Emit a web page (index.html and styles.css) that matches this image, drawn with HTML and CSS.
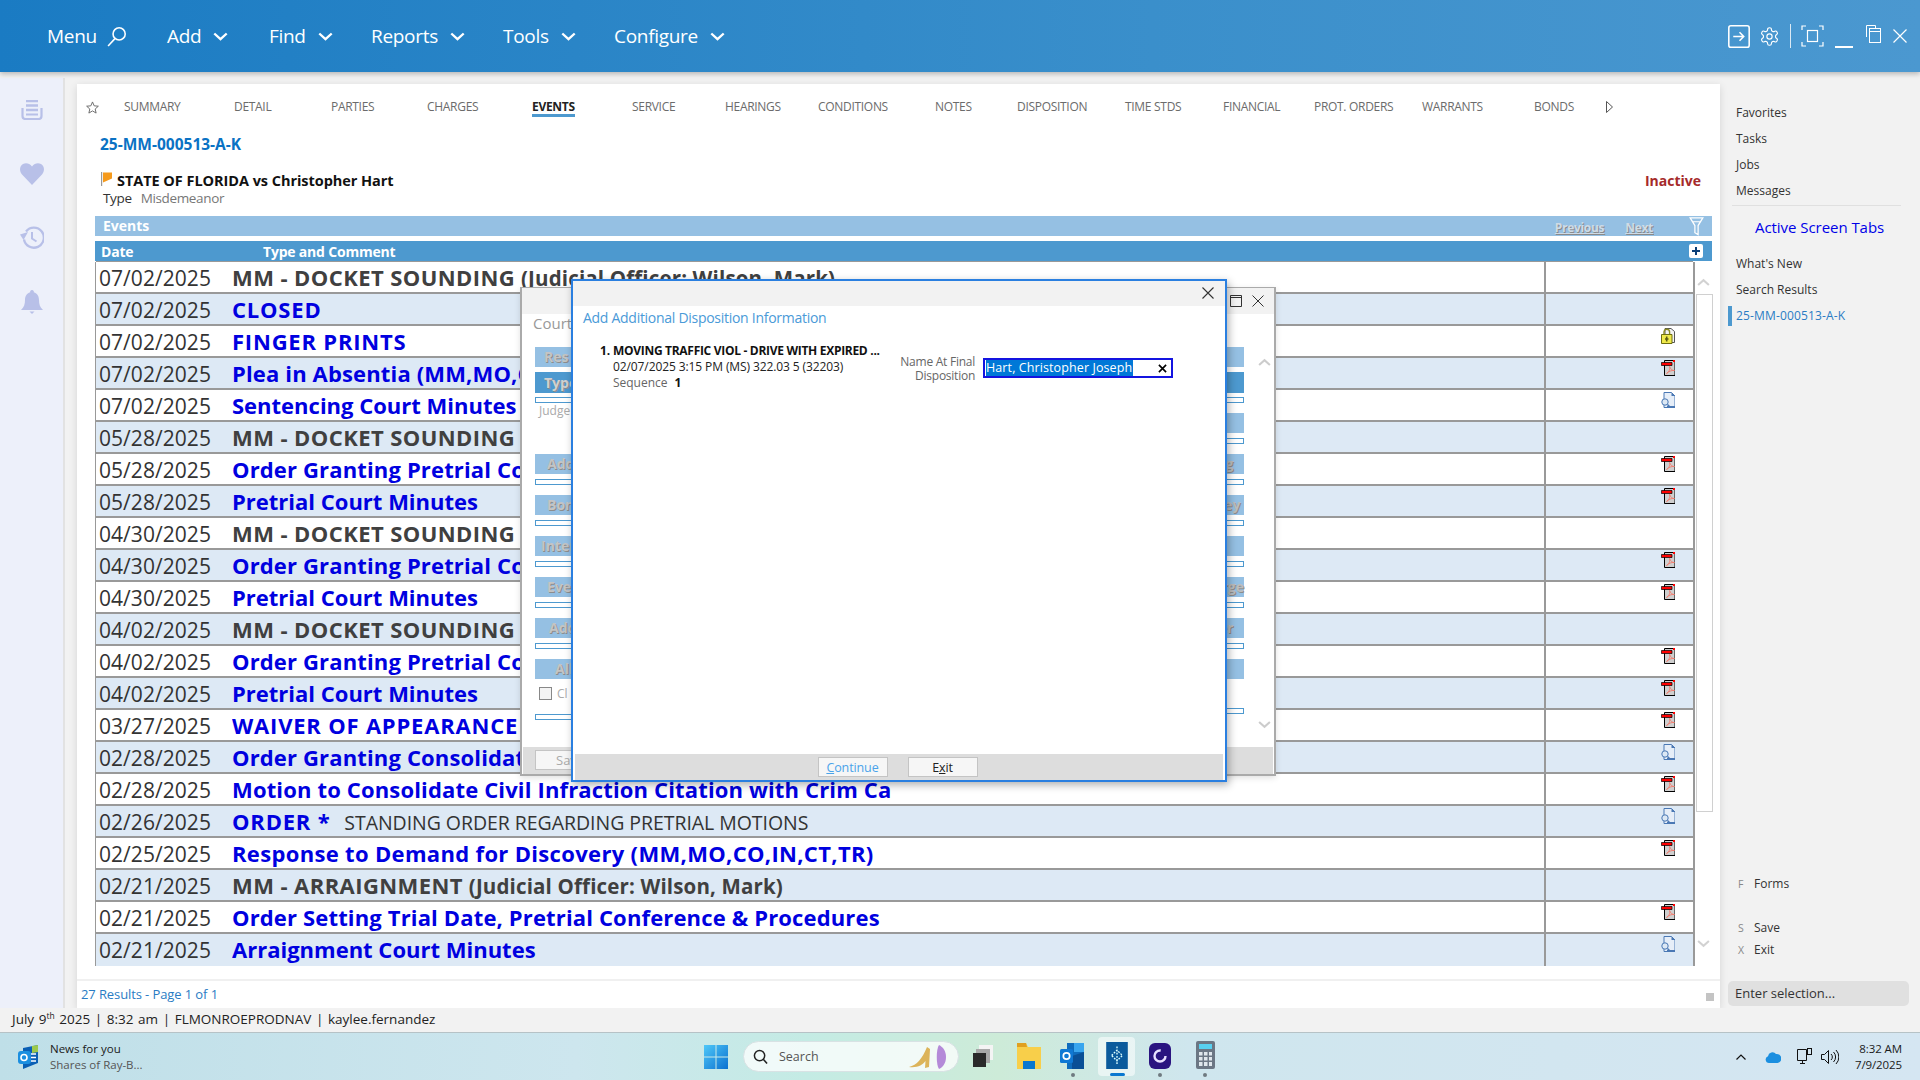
FILE: index.html
```html
<!DOCTYPE html>
<html lang="en">
<head>
<meta charset="utf-8">
<title>25-MM-000513-A-K</title>
<link rel="stylesheet" href="styles.css">
</head>
<body>
<svg class="sprite" aria-hidden="true">
  <symbol id="chev" viewBox="0 0 14 8"><path d="M1.200 1.200 7 6.500l5.800-5.300" fill="none" stroke="currentColor" stroke-width="2.200"/></symbol>
  <symbol id="pdf" viewBox="0 0 14 16">
    <path d="M3.500.5H14v15H3.500z" fill="#cfcfcf" stroke="#000"/>
    <path d="M.4 2.500h10.600v3H.4z" fill="#f00" stroke="#000" stroke-width=".7"/>
    <path d="M12 0h2v2h-2z" fill="#f00"/>
    <path d="M8.500 6.500c1 3-1 6-3 7 2-2 5-3.500 8-3-2 .5-4-1.500-5-4z" fill="none" stroke="#f47a6c" stroke-width=".9"/>
  </symbol>
  <symbol id="doc" viewBox="0 0 14 16">
    <path d="M3 .5h7.500L14 4v11.500H3z" fill="#e6eef8" stroke="#4a78b4"/>
    <path d="M10.500.5V4H14z" fill="#4a78b4"/>
    <path d="M6 15h8" stroke="#4a78b4" stroke-width="2"/>
    <circle cx="4" cy="10" r="3.200" fill="#dce8f4" stroke="#4a78b4"/>
    <path d="m6.500 12.500 2 2" stroke="#4a78b4" stroke-width="1.500"/>
  </symbol>
  <symbol id="lock" viewBox="0 0 14 16">
    <path d="M4 .5h6l3.500 3v11H4z" fill="#f4f4f4" stroke="#555"/>
    <path d="M3 7V4a2.800 2.800 0 0 1 5.600 0v3" fill="none" stroke="#8a8a20" stroke-width="1.400"/>
    <path d="M.5 6.500h10.500v9H.5z" fill="#efe94a" stroke="#6e6e10"/>
    <path d="M5.700 8.500v5M4 11h3.500" stroke="#5a5a10" stroke-width="1.600"/>
  </symbol>
</svg>

<header class="topbar">
  <nav class="topnav">
    <span class="navitem navmenu">Menu
      <svg class="ico-search" viewBox="0 0 20 20"><circle cx="12.500" cy="7.500" r="5.800" fill="none" stroke="currentColor" stroke-width="1.500"/><path d="M8.500 12 2 19" stroke="currentColor" stroke-width="1.500"/></svg>
    </span>
    <span class="navitem nav-add">Add <svg class="ico-chev"><use href="#chev"/></svg></span>
    <span class="navitem nav-find">Find <svg class="ico-chev"><use href="#chev"/></svg></span>
    <span class="navitem nav-reports">Reports <svg class="ico-chev"><use href="#chev"/></svg></span>
    <span class="navitem nav-tools">Tools <svg class="ico-chev"><use href="#chev"/></svg></span>
    <span class="navitem nav-config">Configure <svg class="ico-chev"><use href="#chev"/></svg></span>
  </nav>
  <div class="winctl">
    <svg class="w-login" viewBox="0 0 21 22"><rect x=".75" y=".75" width="19.500" height="20.500" rx="2" fill="none" stroke="#fff" stroke-width="1.500"/><path d="M5 11h10M11 7l4 4-4 4" fill="none" stroke="#fff" stroke-width="1.500"/></svg>
    <svg class="w-gear" viewBox="0 0 24 24"><path d="M12.220 2h-.44a2 2 0 0 0-2 2v.18a2 2 0 0 1-1 1.730l-.43.250a2 2 0 0 1-2 0l-.15-.08a2 2 0 0 0-2.730.730l-.22.380a2 2 0 0 0 .73 2.730l.15.100a2 2 0 0 1 1 1.720v.510a2 2 0 0 1-1 1.740l-.15.090a2 2 0 0 0-.73 2.730l.22.380a2 2 0 0 0 2.730.730l.15-.08a2 2 0 0 1 2 0l.43.250a2 2 0 0 1 1 1.730V20a2 2 0 0 0 2 2h.44a2 2 0 0 0 2-2v-.18a2 2 0 0 1 1-1.730l.43-.25a2 2 0 0 1 2 0l.15.080a2 2 0 0 0 2.730-.73l.22-.39a2 2 0 0 0-.73-2.730l-.15-.08a2 2 0 0 1-1-1.740v-.5a2 2 0 0 1 1-1.740l.15-.09a2 2 0 0 0 .73-2.730l-.22-.38a2 2 0 0 0-2.730-.73l-.15.080a2 2 0 0 1-2 0l-.43-.25a2 2 0 0 1-1-1.730V4a2 2 0 0 0-2-2z" fill="none" stroke="#fff" stroke-width="1.300"/><circle cx="12" cy="12" r="3" fill="none" stroke="#fff" stroke-width="1.300"/></svg>
    <span class="w-sep"></span>
    <svg class="w-full" viewBox="0 0 23 22"><path d="M5 1H1v4M18 1h4v4M5 21H1v-4M18 21h4v-4" fill="none" stroke="#fff" stroke-width="1.200"/><rect x="6.500" y="5.500" width="10" height="11" fill="none" stroke="#fff" stroke-width="1.200"/></svg>
    <span class="w-min"></span>
    <svg class="w-rest" viewBox="0 0 15 18"><path d="M.5 12V.5h9v3" fill="none" stroke="#fff"/><rect x="3.500" y="3.500" width="11" height="14" fill="none" stroke="#fff"/><path d="M3.500 6.500h11" stroke="#fff"/></svg>
    <svg class="w-close" viewBox="0 0 14 14"><path d="m.5.500 13 13M13.500.5l-13 13" stroke="#fff" stroke-width="1.200"/></svg>
  </div>
</header>

<div class="middle">
  <aside class="rail">
    <svg class="r-ico r-list" viewBox="0 0 22 20"><path d="M5 1h12M5 5.500h12M5 10h12" stroke="#b8c0e8" stroke-width="2.400"/><path d="M1.500 8v8a3 3 0 0 0 3 3h13a3 3 0 0 0 3-3V8M5 14.500h12" fill="none" stroke="#b8c0e8" stroke-width="2.200"/></svg>
    <svg class="r-ico r-heart" viewBox="0 0 24 22"><path d="M12 22 2 11.500C-1 8-.5 3 3 1c3-1.600 6.500-.8 9 2.500C14.500.2 18-.6 21 1c3.500 2 4 7 1 10.500z" fill="#b8c0e8"/></svg>
    <svg class="r-ico r-hist" viewBox="0 0 24 24"><path d="M4 13.500A10 10 0 1 0 6 5.500" fill="none" stroke="#b8c0e8" stroke-width="2.300"/><path d="M0 8.500 8 6 3.500 14z" fill="#b8c0e8"/><path d="M12 6v6.500l4.500 3" fill="none" stroke="#b8c0e8" stroke-width="2"/></svg>
    <svg class="r-ico r-bell" viewBox="0 0 22 24"><path d="M11 0a1.800 1.800 0 0 1 1.800 2.300C16.500 3.500 18 6.500 18 10c0 4 .8 7 4 10H0c3.200-3 4-6 4-10 0-3.500 1.500-6.500 5.200-7.700A1.800 1.800 0 0 1 11 0z" fill="#b8c0e8"/><path d="M8.500 21.500h5L11 24z" fill="#b8c0e8"/></svg>
  </aside>

  <main class="panel">
    <div class="tabs">
      <svg class="star" viewBox="0 0 14 14"><path d="m7 1 1.800 4.200 4.500.4-3.400 3 1 4.400L7 10.700 3.100 13l1-4.400-3.400-3 4.500-.4z" fill="none" stroke="#666"/></svg>
      <span>SUMMARY</span><span>DETAIL</span><span>PARTIES</span><span>CHARGES</span>
      <span class="tab-on">EVENTS</span><span>SERVICE</span><span>HEARINGS</span><span>CONDITIONS</span>
      <span>NOTES</span><span>DISPOSITION</span><span>TIME STDS</span><span>FINANCIAL</span>
      <span>PROT. ORDERS</span><span>WARRANTS</span><span>BONDS</span>
      <svg class="tab-more" viewBox="0 0 7 12"><path d="m.5.500 6 5.500-6 5.500z" fill="none" stroke="#555"/></svg>
    </div>
    <div class="caseno">25-MM-000513-A-K</div>
    <div class="caserow">
      <svg class="flag" viewBox="0 0 11 14"><path d="M.5 0v14" stroke="#999" stroke-width="1.400"/><path d="M2 .5h9v6l-9 4z" fill="#f59a1c"/></svg>
      <span class="casetitle">STATE OF FLORIDA vs Christopher Hart</span>
      <span class="inactive">Inactive</span>
    </div>
    <div class="typerow"><span class="type-l">Type</span><span class="type-v">Misdemeanor</span></div>

    <div class="evbar">
      <span class="evtitle">Events</span>
      <span class="evlink evprev">Previous</span>
      <span class="evlink evnext">Next</span>
      <svg class="funnel" viewBox="0 0 15 20"><path d="M.8 1h13.400l-5 8v9.500l-3.400-2V9zM3 5h9" fill="none" stroke="#fff" stroke-width="1.300"/></svg>
    </div>
    <div class="thead">
      <span class="th-date">Date</span><span class="th-type">Type and Comment</span>
      <span class="plus"><svg viewBox="0 0 10 10"><path d="M5 1v8M1 5h8" stroke="#0b3f78" stroke-width="2"/></svg></span>
    </div>

    <div class="tablewrap">
      <div class="table">
        <div class="row"><span class="d">07/02/2025</span><span class="t dark"><span class="cap2">MM - DOCKET SOUNDING</span> <small>(Judicial Officer: Wilson, Mark)</small></span><span class="x"></span></div>
        <div class="row"><span class="d">07/02/2025</span><span class="t cap">CLOSED</span><span class="x"></span></div>
        <div class="row"><span class="d">07/02/2025</span><span class="t cap">FINGER PRINTS</span><span class="x"><svg class="fi"><use href="#lock"/></svg></span></div>
        <div class="row"><span class="d">07/02/2025</span><span class="t">Plea in Absentia (MM,MO,CO,IN,CT,TR)</span><span class="x"><svg class="fi"><use href="#pdf"/></svg></span></div>
        <div class="row"><span class="d">07/02/2025</span><span class="t tight">Sentencing Court Minutes</span><span class="x"><svg class="fi"><use href="#doc"/></svg></span></div>
        <div class="row"><span class="d">05/28/2025</span><span class="t dark cap2">MM - DOCKET SOUNDING</span><span class="x"></span></div>
        <div class="row"><span class="d">05/28/2025</span><span class="t">Order Granting Pretrial Continuance</span><span class="x"><svg class="fi"><use href="#pdf"/></svg></span></div>
        <div class="row"><span class="d">05/28/2025</span><span class="t tight">Pretrial Court Minutes</span><span class="x"><svg class="fi"><use href="#pdf"/></svg></span></div>
        <div class="row"><span class="d">04/30/2025</span><span class="t dark cap2">MM - DOCKET SOUNDING</span><span class="x"></span></div>
        <div class="row"><span class="d">04/30/2025</span><span class="t">Order Granting Pretrial Continuance</span><span class="x"><svg class="fi"><use href="#pdf"/></svg></span></div>
        <div class="row"><span class="d">04/30/2025</span><span class="t tight">Pretrial Court Minutes</span><span class="x"><svg class="fi"><use href="#pdf"/></svg></span></div>
        <div class="row"><span class="d">04/02/2025</span><span class="t dark cap2">MM - DOCKET SOUNDING</span><span class="x"></span></div>
        <div class="row"><span class="d">04/02/2025</span><span class="t">Order Granting Pretrial Continuance</span><span class="x"><svg class="fi"><use href="#pdf"/></svg></span></div>
        <div class="row"><span class="d">04/02/2025</span><span class="t tight">Pretrial Court Minutes</span><span class="x"><svg class="fi"><use href="#pdf"/></svg></span></div>
        <div class="row"><span class="d">03/27/2025</span><span class="t cap">WAIVER OF APPEARANCE</span><span class="x"><svg class="fi"><use href="#pdf"/></svg></span></div>
        <div class="row"><span class="d">02/28/2025</span><span class="t">Order Granting Consolidation</span><span class="x"><svg class="fi"><use href="#doc"/></svg></span></div>
        <div class="row"><span class="d">02/28/2025</span><span class="t">Motion to Consolidate Civil Infraction Citation with Crim Ca</span><span class="x"><svg class="fi"><use href="#pdf"/></svg></span></div>
        <div class="row"><span class="d">02/26/2025</span><span class="t"><span class="cap">ORDER *</span> <em>STANDING ORDER REGARDING PRETRIAL MOTIONS</em></span><span class="x"><svg class="fi"><use href="#doc"/></svg></span></div>
        <div class="row"><span class="d">02/25/2025</span><span class="t wide">Response to Demand for Discovery (MM,MO,CO,IN,CT,TR)</span><span class="x"><svg class="fi"><use href="#pdf"/></svg></span></div>
        <div class="row"><span class="d">02/21/2025</span><span class="t dark"><span class="cap2">MM - ARRAIGNMENT</span> <small>(Judicial Officer: Wilson, Mark)</small></span><span class="x"></span></div>
        <div class="row"><span class="d">02/21/2025</span><span class="t">Order Setting Trial Date, Pretrial Conference &amp; Procedures</span><span class="x"><svg class="fi"><use href="#pdf"/></svg></span></div>
        <div class="row"><span class="d">02/21/2025</span><span class="t tight">Arraignment Court Minutes</span><span class="x"><svg class="fi"><use href="#doc"/></svg></span></div>
      </div>
      <div class="scroll">
        <svg class="sc-up"><use href="#chev"/></svg>
        <div class="sc-track"></div>
        <svg class="sc-down"><use href="#chev"/></svg>
      </div>
    </div>
    <div class="resultsbar"><span>27 Results - Page 1 of 1</span><i class="grip"></i></div>
  </main>

  <aside class="side">
    <ul class="s-list s-top"><li>Favorites</li><li>Tasks</li><li>Jobs</li><li>Messages</li></ul>
    <div class="s-head">Active Screen Tabs</div>
    <ul class="s-list s-tabs"><li>What's New</li><li>Search Results</li><li class="s-on">25-MM-000513-A-K</li></ul>
    <ul class="s-keys">
      <li class="k-forms"><b>F</b>Forms</li>
      <li class="k-save"><b>S</b>Save</li>
      <li><b>X</b>Exit</li>
    </ul>
    <div class="s-input">Enter selection...</div>
  </aside>
</div>

<div class="status">July 9<sup>th</sup> 2025 | 8:32 am | FLMONROEPRODNAV | kaylee.fernandez</div>

<footer class="taskbar">
  <div class="news">
    <svg class="news-ico" viewBox="0 0 24 24"><path d="M5 3 20 0v18L5 24z" fill="#0a5fb4"/><path d="M14 1 20 0v7l-6 1z" fill="#9cc94a"/><rect x="0" y="6" width="13" height="13" rx="3" fill="#1b8fe0"/><circle cx="6" cy="12.500" r="3" fill="none" stroke="#fff" stroke-width="1.600"/><path d="M13 9h5M13 12.500h5M13 16h5" stroke="#fff" stroke-width="1.400"/></svg>
    <div class="news-t"><span>News for you</span><span class="news-s">Shares of Ray-B...</span></div>
  </div>
  <div class="tb-center">
    <svg class="tb-win" viewBox="0 0 24 24"><defs><linearGradient id="wg" x1="0" y1="0" x2="1" y2="1"><stop offset="0" stop-color="#4fc8f8"/><stop offset="1" stop-color="#0a70d0"/></linearGradient></defs><path d="M0 0h11.500v11.500H0zM12.500 0H24v11.500H12.500zM0 12.500h11.500V24H0zM12.500 12.500H24V24H12.500z" fill="url(#wg)"/></svg>
    <div class="tb-search">
      <svg class="tb-q" viewBox="0 0 16 16"><circle cx="7" cy="7" r="5.500" fill="none" stroke="#222" stroke-width="1.600"/><path d="m11 11 4 4.500" stroke="#222" stroke-width="1.600"/></svg>
      <span>Search</span>
      <svg class="tb-shoe" viewBox="0 0 38 24"><path d="M0 22c8-2 13-8 18-20l3 2-1 18-4 1 .5-7c-3 4-8 7-16.500 6z" fill="#dcb45a"/><path d="M30 0c4 2 7 6 7 12s-3 10-7 12c-3-4-3-20 0-24z" fill="#b48ad8"/></svg>
    </div>
    <svg class="tb-app a-task" viewBox="0 0 20 22"><path d="M6 0h14v15H6z" fill="#f4f4f4"/><path d="M3 4h14v14H3z" fill="#a8a8a8"/><path d="M0 8h13v14H0z" fill="#2a2a2a"/></svg>
    <svg class="tb-app a-file" viewBox="0 0 24 26"><path d="M0 0h9l2 4h13v22H0z" fill="#f8cf4a"/><path d="M0 0h9l1 4H0z" fill="#e0a020"/><path d="M6 18h12v8H6z" fill="#0a78d0"/></svg>
    <svg class="tb-app a-out" viewBox="0 0 25 26"><path d="M7 0h17v26H7z" fill="#0f6cbd"/><path d="M14 0h10v9H14z" fill="#39a5ee"/><path d="M12 13l12-4v17H12z" fill="#0a4f96"/><rect x="0" y="6" width="13" height="14" rx="1.500" fill="#0f78d4"/><circle cx="6.500" cy="13" r="3.200" fill="none" stroke="#fff" stroke-width="1.700"/></svg>
    <span class="tb-active"><svg class="a-nav" viewBox="0 0 24 30"><rect width="24" height="30" fill="#0a5a9c"/><path d="M12 5v20M6 15l6-6 6 6-6 6z" fill="none" stroke="#dff" stroke-width="1.500" stroke-dasharray="2 1.500"/></svg><i class="tb-under"></i></span>
    <svg class="tb-app a-g" viewBox="0 0 22 26"><rect width="22" height="26" rx="6" fill="#2a1480"/><circle cx="11" cy="13" r="5.500" fill="none" stroke="#e8e0ff" stroke-width="2.400" stroke-dasharray="26 8"/></svg>
    <svg class="tb-app a-calc" viewBox="0 0 19 28"><rect width="19" height="28" rx="2" fill="#6b7684"/><rect x="3" y="3" width="13" height="5" fill="#58d0f0"/><path d="M3 11h3.500v3.500H3zM8 11h3.500v3.500H8zM13 11h3v3.500h-3zM3 16h3.500v3.500H3zM8 16h3.500v3.500H8zM13 16h3v3.500h-3zM3 21h3.500v4H3zM8 21h3.500v4H8zM13 21h3v4h-3z" fill="#dfe6ec"/></svg>
    <i class="dot d-out"></i><i class="dot d-g"></i><i class="dot d-calc"></i>
  </div>
  <div class="tray">
    <svg class="tr-chev" viewBox="0 0 10 6"><path d="M.5 5.500 5 1l4.500 4.500" fill="none" stroke="#111" stroke-width="1.200"/></svg>
    <svg class="tr-cloud" viewBox="0 0 16 12"><path d="M4 12a3.500 3.500 0 0 1-1-6.800A4.500 4.500 0 0 1 11 3a4.500 4.500 0 0 1 1.500 9z" fill="#1b8fe0"/></svg>
    <svg class="tr-net" viewBox="0 0 16 18"><path d="M.5 1.500h9v11h-9zM3 15.500h5M5.500 12.500v3" fill="none" stroke="#111"/><rect x="10.500" y=".5" width="4" height="6" fill="none" stroke="#111"/></svg>
    <svg class="tr-vol" viewBox="0 0 18 16"><path d="M.5 5.500h3l4-4v13l-4-4h-3z" fill="none" stroke="#111"/><path d="M10 5a4 4 0 0 1 0 6M12.500 3a7 7 0 0 1 0 10M15 1a10 10 0 0 1 0 14" fill="none" stroke="#111"/></svg>
    <div class="clock"><span>8:32 AM</span><span>7/9/2025</span></div>
  </div>
</footer>

<section class="back-modal">
  <div class="bm-title">
    <svg class="bm-max" viewBox="0 0 12 12"><path d="M.5.500h11v11H.5zM.5 2.500h11" fill="none" stroke="#333"/></svg>
    <svg class="bm-x" viewBox="0 0 12 12"><path d="m.5.500 11 11M11.500.5l-11 11" stroke="#333"/></svg>
  </div>
  <div class="bm-court">Court</div>
  <div class="bm-cols">
    <div class="bm-col">
      <div class="bar">Res</div>
      <div class="bar bar-d">Type</div>
      <div class="inp inp-a"></div>
      <div class="bm-judge">Judge</div>
      <div class="bar pc">Add</div><div class="inp"></div>
      <div class="bar pc">Bond</div><div class="inp"></div>
      <div class="bar ps">Inter</div><div class="inp"></div>
      <div class="bar pc">Event</div><div class="inp"></div>
      <div class="bar pd">Add</div><div class="inp"></div>
      <div class="bar pl">All</div>
      <label class="bm-check"><i></i>Cl</label>
      <div class="inp"></div>
    </div>
    <div class="bm-col">
      <div class="bar">&nbsp;</div>
      <div class="bar bar-d">&nbsp;</div>
      <div class="inp inp-a"></div>
      <div class="bar b-r2">&nbsp;</div><div class="inp"></div>
      <div class="bar r-txt">Pending&ensp;&nbsp;</div><div class="inp"></div>
      <div class="bar r-txt">Attorney&nbsp;</div><div class="inp"></div>
      <div class="bar">&nbsp;</div><div class="inp"></div>
      <div class="bar r-txt">Charge</div><div class="inp"></div>
      <div class="bar r-txt">Other&ensp;&nbsp;</div><div class="inp"></div>
      <div class="bar">&nbsp;</div>
      <div class="inp inp-last"></div>
    </div>
  </div>
  <svg class="bm-up"><use href="#chev"/></svg>
  <svg class="bm-down"><use href="#chev"/></svg>
  <div class="bm-foot"><span class="bm-save">Save</span></div>
</section>

<section class="modal">
  <div class="m-title">
    <svg class="m-x" viewBox="0 0 12 12"><path d="m.5.500 11 11M11.500.5l-11 11" stroke="#333" stroke-width="1.100"/></svg>
  </div>
  <h2 class="m-head">Add Additional Disposition Information</h2>
  <div class="m-body">
    <div class="m-item">
      <div class="m-no">1.</div>
      <div class="m-lines">
        <div class="m-l1">MOVING TRAFFIC VIOL - DRIVE WITH EXPIRED ...</div>
        <div class="m-l2">02/07/2025 3:15 PM (MS) 322.03 5 (32203)</div>
        <div class="m-l3">Sequence <b>1</b></div>
      </div>
    </div>
    <div class="m-label">Name At Final<br>Disposition</div>
    <div class="m-input"><span>Hart, Christopher Joseph</span><svg viewBox="0 0 10 10"><path d="m1 1 8 8M9 1 1 9" stroke="#000" stroke-width="1.800"/></svg></div>
  </div>
  <div class="m-foot">
    <button class="btn btn-c" type="button"><u>C</u>ontinue</button>
    <button class="btn" type="button">E<u>x</u>it</button>
  </div>
</section>
</body>
</html>
```
FILE: styles.css
```css
* { box-sizing: border-box; }
html, body { margin: 0; padding: 0; }
body {
  width: 1920px; height: 1080px; overflow: hidden; position: relative;
  background: #f2f2f2; color: #222;
  font-family: "Open Sans", "Noto Sans", sans-serif;
  display: flex; flex-direction: column;
}
.sprite { position: absolute; width: 0; height: 0; }
ul { list-style: none; margin: 0; padding: 0; }

/* header */
.topbar {
  height: 72px; flex: none; display: flex; align-items: center; justify-content: space-between;
  background: linear-gradient(90deg, #1a7bc3 0%, #3a8fcb 60%, #4b98d0 100%);
  box-shadow: 0 2px 5px rgba(0,0,0,.25); color: #fff; position: relative; z-index: 2;
}
.topnav { display: flex; padding-left: 47px; }
.navitem { display: flex; align-items: center; font-size: 19px; letter-spacing: -.3px; white-space: nowrap; }
.navmenu { width: 120px; gap: 9px; }
.nav-add { width: 102px; gap: 12px; }
.nav-find { width: 102px; gap: 12px; }
.nav-reports { width: 132px; gap: 12px; }
.nav-tools { width: 111px; gap: 12px; }
.nav-config { gap: 12px; }
.ico-search { width: 21px; height: 21px; }
.ico-chev { width: 15px; height: 9px; color: #fff; }
.winctl { display: flex; align-items: center; height: 26px; padding-right: 13px; }
.w-login { width: 22px; height: 23px; }
.w-gear { width: 21px; height: 21px; margin-left: 9px; }
.w-sep { width: 1px; height: 24px; background: #dbe9f4; margin-left: 10px; }
.w-full { width: 23px; height: 22px; margin-left: 10px; }
.w-min { width: 18px; height: 2px; background: #fff; margin-left: 11px; align-self: flex-end; margin-bottom: 1px; }
.w-rest { width: 15px; height: 18px; margin-left: 13px; margin-top: -4px; }
.w-close { width: 14px; height: 14px; margin-left: 12px; }

/* middle */
.middle { flex: none; height: 936px; display: flex; }
.rail {
  width: 65px; margin-top: 6px; background: #edf0fa; border-right: 2px solid #e2e2e2;
  display: flex; flex-direction: column; align-items: center;
}
.r-ico { display: block; }
.r-list { width: 22px; height: 20px; margin-top: 22px; }
.r-heart { width: 24px; height: 22px; margin-top: 43px; }
.r-hist { width: 24px; height: 24px; margin-top: 41px; }
.r-bell { width: 22px; height: 24px; margin-top: 40px; }

.panel {
  width: 1643px; margin: 12px 0 0 12px; background: #fff; padding: 0 8px 0 18px;
  box-shadow: 0 2px 8px rgba(0,0,0,.12); display: flex; flex-direction: column;
}
.tabs {
  height: 34px; padding-top: 12px; margin-left: -9px; display: grid; align-items: start;
  grid-template-columns: 38px 110px 97px 96px 105px 100px 93px 93px 117px 82px 108px 98px 91px 108px 112px 72px 10px;
  font-size: 12px; color: #6b6b6b; letter-spacing: -.3px; line-height: 22px;
}
.star { width: 13px; height: 13px; margin-top: 5px; }
.tab-on { color: #222; font-weight: 700; width: fit-content; height: 21px; border-bottom: 3px solid #4d99cf; }
.tab-more { width: 7px; height: 12px; margin-top: 5px; }
.caseno { margin: 16px 0 0 5px; height: 20px; line-height: 20px; font-size: 15.500px; font-weight: 700; color: #0a72c4; letter-spacing: 0; }
.caserow { margin-top: 17px; height: 20px; display: flex; align-items: center; padding: 0 11px 0 6px; line-height: 20px; }
.flag { width: 11px; height: 14px; margin-top: -5px; }
.casetitle { margin-left: 5px; font-size: 14.500px; font-weight: 700; color: #111; letter-spacing: -.05px; }
.inactive { margin-left: auto; font-size: 14px; font-weight: 700; color: #a52a2a; }
.typerow { margin: -2px 0 0 8px; height: 18px; line-height: 18px; font-size: 13.500px; letter-spacing: -.35px; display: flex; gap: 9px; color: #333; }
.type-v { color: #777; }
.evbar {
  margin-top: 9px; height: 20px; background: #95c0e3; position: relative; line-height: 20px;
  display: flex; align-items: center; padding-left: 8px; flex: none;
}
.evtitle { color: #fff; font-size: 14px; font-weight: 700; }
.evlink { font-size: 12px; font-weight: 700; color: #cfdbe6; text-decoration: underline; text-shadow: 1px 1px 0 #8a8a8a; letter-spacing: -.3px; margin-top: 3px; }
.evprev { margin-left: auto; }
.evnext { margin-left: 21px; margin-right: 36px; }
.funnel { width: 15px; height: 19px; margin-right: 8px; }
.thead {
  margin-top: 5px; height: 20px; background: #4d99cf; color: #fff; font-weight: 700; font-size: 14px;
  display: flex; align-items: center; line-height: 20px; padding: 2px 0 0 6px; flex: none; letter-spacing: -.2px;
}
.th-date { width: 162px; }
.plus {
  margin: -2px 9px 0 auto; width: 14px; height: 14px; background: #fff; border-radius: 2px;
  display: flex; align-items: center; justify-content: center;
}
.plus svg { width: 10px; height: 10px; }

/* table */
.tablewrap { display: flex; height: 704px; flex: none; margin-top: 1px; }
.table { width: 1600px; flex: none; border-left: 1px solid #999; border-right: 2px solid #999; border-top: 0; }
.row {
  height: 32px; display: grid; grid-template-columns: 136px 1312px 149px; align-items: stretch;
  border-bottom: 2px solid #999; background: #fff; box-shadow: 0 -1px 0 #999;
}
.row:nth-child(even) { background: #dde9f5; }
.row:last-child { border-bottom: 0; }
.d { font-size: 21px; line-height: 32px; padding-left: 3px; color: #333; letter-spacing: .05px; }
.t { font-size: 22px; line-height: 31px; font-weight: 700; color: #0000e0; white-space: nowrap; overflow: hidden; letter-spacing: .15px; }
.t.dark { color: #404040; }
.cap { letter-spacing: .8px; }
.cap2 { letter-spacing: .42px; }
.tight { letter-spacing: 0; }
.wide { letter-spacing: .33px; }
.t small { font-size: 20.500px; font-weight: 700; letter-spacing: .15px; }
.t em { font-style: normal; font-weight: 400; color: #333; font-size: 19.500px; margin-left: 8px; letter-spacing: -.05px; }
.x { border-left: 2px solid #999; padding: 2px 0 0 115px; }
.fi { width: 14px; height: 16px; display: block; }
.scroll { flex: none; width: 18px; position: relative; }
.sc-track { position: absolute; left: 1px; right: 0; top: 32px; height: 518px; border: 1px solid #d0d0d0; }
.sc-up, .sc-down { position: absolute; left: 2px; width: 13px; height: 9px; color: #d2d2d2; }
.sc-up { top: 16px; transform: scaleY(-1); }
.sc-down { top: 677px; }
.resultsbar {
  margin: 13px -8px 0 -18px; height: 29px; border-top: 2px solid #f0f0f0; padding: 0 6px 2px 4px;
  display: flex; align-items: center; justify-content: space-between;
  font-size: 13px; color: #2a7cc4; letter-spacing: -.1px;
}
.grip { width: 8px; height: 8px; background: #c4c4c4; margin-top: 6px; }

/* right side */
.side { flex: 1; padding: 28px 11px 0 8px; position: relative; display: flex; flex-direction: column; font-size: 12px; color: #333; letter-spacing: 0; }
.s-list li { height: 26px; line-height: 26px; padding-left: 8px; }
.s-top { border-bottom: 1px solid #e0e0e0; padding-bottom: 1px; margin-left: 4px; margin-right: 8px; }
.s-top li { padding-left: 4px; }
.s-head { font-size: 15px; color: #0000e8; margin: 9px 0 0 27px; height: 24px; line-height: 24px; letter-spacing: -.05px; }
.s-tabs { margin-top: 12px; }
.s-on { color: #2a7cc4; border-left: 4px solid #4d99cf; height: 20px !important; line-height: 20px !important; margin-top: 3px; padding-left: 4px !important; letter-spacing: .15px; }
.s-keys { margin-top: auto; padding-left: 10px; }
.s-keys li { height: 22px; line-height: 22px; display: flex; }
.s-keys b { width: 16px; font-weight: 400; color: #888; font-size: 10.500px; }
.k-forms { margin-bottom: 22px; }
.s-input {
  margin-top: 20px; margin-bottom: 2px; height: 25px; line-height: 25px; background: #e0e0e0; border-radius: 5px;
  padding-left: 7px; font-size: 13px; color: #333;
}

/* status */
.status { height: 24px; flex: none; line-height: 22px; padding-left: 12px; font-size: 13.500px; color: #222; letter-spacing: 0; word-spacing: 1.100px; background: #f2f2f2; }
.status sup { font-size: 8.500px; line-height: 0; }

/* taskbar */
.taskbar {
  height: 48px; flex: none; position: relative; border-top: 1px solid #b6c2c6;
  background: linear-gradient(90deg, #bfdfe8 0%, #cde6ee 30%, #c4ebe4 42%, #cdebd8 52%, #cfe6ee 62%, #d5e6f2 100%);
  display: flex; align-items: center; justify-content: space-between;
}
.news { display: flex; align-items: center; padding-left: 18px; gap: 8px; }
.news-ico { width: 24px; height: 24px; }
.news-t { display: flex; flex-direction: column; font-size: 11.500px; line-height: 16px; color: #1a1a1a; letter-spacing: 0; }
.news-s { color: #555; }
.tb-center { position: absolute; left: 704px; top: 0; height: 47px; width: 520px; }
.tb-center > * { position: absolute; }
.tb-win { left: 0; top: 12px; width: 24px; height: 24px; }
.tb-search {
  left: 39px; top: 8px; width: 216px; height: 31px; border-radius: 16px; background: rgba(255,255,255,.75);
  border: 1px solid #d8e2e4; display: flex; align-items: center; font-size: 12.500px; color: #555;
}
.tb-q { width: 15px; height: 15px; margin: 0 11px 0 9px; }
.tb-shoe { width: 38px; height: 24px; margin-left: auto; margin-right: 11px; }
.tb-app { display: block; }
.a-task { left: 269px; top: 12px; width: 20px; height: 22px; }
.a-file { left: 313px; top: 10px; width: 24px; height: 26px; }
.a-out { left: 356px; top: 10px; width: 25px; height: 26px; }
.tb-active { left: 394px; top: 4px; width: 37px; height: 39px; background: rgba(255,255,255,.55); border-radius: 4px; }
.a-nav { position: absolute; left: 7px; top: 5px; width: 24px; height: 27px; }
.tb-under { position: absolute; left: 12px; bottom: 0; width: 15px; height: 3px; background: #0a78d0; border-radius: 2px; }
.a-g { left: 445px; top: 10px; width: 22px; height: 26px; }
.a-calc { left: 492px; top: 8px; width: 19px; height: 28px; }
.dot { width: 4px; height: 4px; border-radius: 50%; background: #6f7a80; top: 40px; }
.d-out { left: 367px; }
.d-g { left: 454px; }
.d-calc { left: 499px; }
.tray { display: flex; align-items: center; padding-right: 18px; }
.tr-chev { width: 10px; height: 6px; }
.tr-cloud { width: 16px; height: 12px; margin-left: 19px; }
.tr-net { width: 16px; height: 18px; margin-left: 16px; }
.tr-vol { width: 18px; height: 16px; margin-left: 8px; }
.clock { display: flex; flex-direction: column; align-items: flex-end; margin-left: 16px; font-size: 11.500px; line-height: 16px; color: #1a1a1a; letter-spacing: -.1px; }

/* background modal */
.back-modal {
  position: absolute; left: 520px; top: 287px; width: 756px; height: 489px; background: #fff;
  border: 2px solid #aaa; border-top-width: 1px;
  box-shadow: 0 2px 6px rgba(0,0,0,.12); z-index: 5; font-size: 13px;
}
.bm-title { height: 26px; background: #f2f2f2; display: flex; justify-content: flex-end; align-items: center; gap: 10px; padding-right: 10px; }
.bm-max, .bm-x { width: 12px; height: 12px; }
.bm-court { position: absolute; left: 11px; top: 25px; font-size: 15px; color: #999; line-height: 20px; }
.bm-cols { position: absolute; left: 13px; right: 30px; top: 59px; display: flex; justify-content: space-between; }
.bm-col { width: 300px; }
.bar { height: 20px; margin-bottom: 5px; background: #95c0e3; color: #c4c4c4; font-weight: 700; line-height: 20px; padding-left: 9px; font-size: 14px; white-space: nowrap; text-shadow: 1px 1px 0 #8d8d8d; }
.pc { padding-left: 12px; }
.ps { padding-left: 6px; }
.pd { padding-left: 14px; }
.pl { padding-left: 20px; }
.bar-d { height: 21px; margin-bottom: 4px; background: #4d99cf; color: #d0d0d0; line-height: 22px; }
.inp { height: 6px; border: 1px solid #4d99cf; margin-bottom: 10px; }
.inp-a { margin-bottom: 0; }
.bm-judge { height: 16px; color: #aaa; font-size: 12px; line-height: 16px; padding-left: 4px; margin-bottom: 35px; }
.b-r2 { margin-top: 10px; }
.r-txt { text-align: right; padding-right: 0; color: #bdbdbd; }
.bm-check { display: flex; align-items: center; gap: 5px; height: 13px; margin: 8px 0 14px 4px; color: #aaa; font-size: 12px; }
.bm-check i { width: 13px; height: 13px; border: 1px solid #888; background: #f4f4f4; }
.inp-last { margin-top: 29px; }
.bm-up, .bm-down { position: absolute; left: 736px; width: 13px; height: 9px; color: #ccc; }
.bm-up { top: 70px; transform: scaleY(-1); }
.bm-down { top: 432px; }
.bm-foot { position: absolute; left: 0; right: 0; bottom: 0; height: 27px; margin: 0 1px; background: #ddd; }
.bm-save { position: absolute; left: 12px; top: 3px; width: 70px; height: 20px; background: #f6f6f6; border: 1px solid #c4c4c4; color: #aaa; line-height: 18px; padding-left: 20px; font-size: 13px; }

/* front modal */
.modal {
  position: absolute; left: 571px; top: 279px; width: 656px; height: 503px; background: #fff;
  border: 2px solid #2a7fe0; box-shadow: 2px 3px 8px rgba(0,0,0,.3); z-index: 6;
  display: flex; flex-direction: column;
}
.m-title { height: 25px; flex: none; background: #f2f2f2; position: relative; display: flex; justify-content: flex-end; align-items: center; padding: 0 11px 2px 0; }
.m-x { width: 12px; height: 12px; }
.m-head { margin: 2px 0 0 10px; font-size: 14px; font-weight: 400; color: #4a9ad8; line-height: 20px; letter-spacing: -.28px; }
.m-body { flex: 1; display: flex; align-items: flex-start; padding: 15px 0 0 27px; }
.m-item { display: flex; width: 300px; font-size: 12px; line-height: 16px; letter-spacing: -.02px; }
.m-no { width: 13px; font-weight: 700; color: #111; }
.m-lines { flex: 1; white-space: nowrap; }
.m-l1 { font-weight: 700; color: #111; letter-spacing: -.3px; }
.m-l2 { color: #222; letter-spacing: -.1px; }
.m-l3 { color: #666; }
.m-l3 b { color: #111; margin-left: 4px; }
.m-label { width: 75px; margin: 12px 0 0 0; text-align: right; font-size: 12px; line-height: 14px; color: #666; letter-spacing: -.25px; white-space: nowrap; }
.m-input {
  margin: 15px 0 0 8px; width: 190px; height: 20px; border: 2px solid #1414e0; display: flex; align-items: center;
  padding: 0 4px 0 1px; justify-content: space-between; font-size: 12.500px; letter-spacing: .1px;
}
.m-input span { background: #0078d7; color: #fff; line-height: 16px; padding-right: 1px; }
.m-input svg { width: 9px; height: 9px; }
.m-foot { height: 26px; flex: none; background: #ddd; display: flex; justify-content: center; gap: 20px; padding: 3px 3px 0 0; margin: 0 2px; position: relative; left: 0; }
.btn { width: 70px; height: 20px; padding: 0; background: #f6f6f6; border: 1px solid #c4c4c4; font: 12.500px "Open Sans", sans-serif; color: #222; letter-spacing: -.1px; }
.btn-c { color: #4aa3ea; }
```
